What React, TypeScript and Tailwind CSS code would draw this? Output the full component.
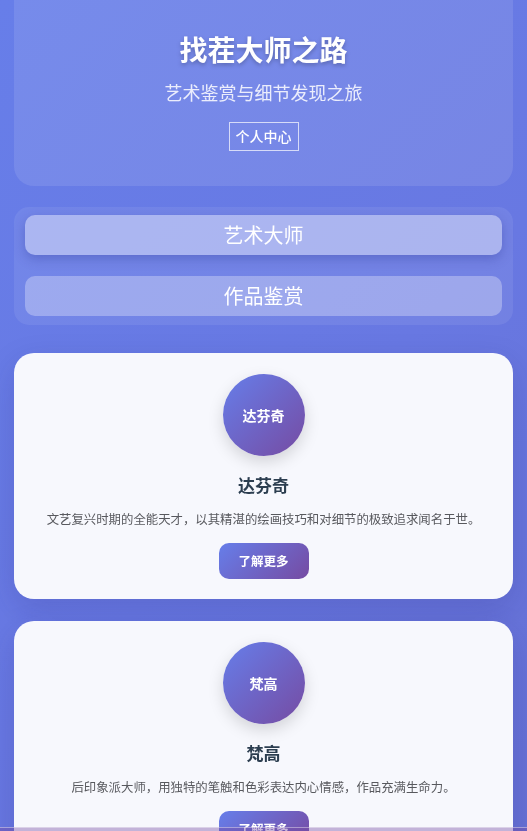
import React from 'react';

const masters = [
  { name: '达芬奇', desc: '文艺复兴时期的全能天才，以其精湛的绘画技巧和对细节的极致追求闻名于世。' },
  { name: '梵高', desc: '后印象派大师，用独特的笔触和色彩表达内心情感，作品充满生命力。' },
  { name: '莫奈', desc: '印象派创始人之一，擅长捕捉光影的瞬间变化，描绘自然的诗意之美。' },
];

const MasterCard: React.FC<{ name: string; desc: string }> = ({ name, desc }) => (
  <div className="flex flex-col items-center rounded-[20px] bg-[#f7f8fd] px-5 pt-[21px] pb-[20px] shadow-[0_10px_30px_rgba(40,40,120,0.18)]">
    <div className="flex h-[82px] w-[82px] items-center justify-center rounded-full bg-[linear-gradient(135deg,#667eea_0%,#764ba2_100%)] shadow-[0_6px_16px_rgba(0,0,0,0.15)]">
      <span className="text-[14px] font-bold text-white">{name}</span>
    </div>
    <h3 className="mt-[15px] text-[17px] leading-[27px] font-bold text-[#2c3e50]">{name}</h3>
    <p className="mt-[11px] text-center text-[12.4px] leading-[20px] text-[#58595e]">{desc}</p>
    <button className="mt-[14px] h-[36px] w-[90px] rounded-[10px] bg-[linear-gradient(135deg,#667eea_0%,#764ba2_100%)] text-[12.5px] font-semibold text-white">
      了解更多
    </button>
  </div>
);

export default function App() {
  return (
    <div className="relative min-h-screen font-['Noto_Sans_CJK_SC','Noto_Sans',sans-serif]">
      <div className="fixed inset-0 -z-10 bg-[linear-gradient(135deg,#677ee9_0%,#6878e2_55%,#6670d4_100%)]" />

      <div className="flex flex-col px-[14px]">
        {/* header */}
        <header className="flex flex-col items-center rounded-b-[20px] bg-white/10 pt-[31px] pb-[35px]">
          <h1 className="text-[28px] leading-[36px] font-bold text-white [text-shadow:0_2px_4px_rgba(0,0,0,0.25)]">
            找茬大师之路
          </h1>
          <p className="mt-[12px] text-[18px] leading-[27px] text-white/85">艺术鉴赏与细节发现之旅</p>
          <button className="mt-[16px] h-[29px] border border-white/70 px-[6px] text-[14px] font-medium text-white">
            个人中心
          </button>
        </header>

        {/* tabs */}
        <nav className="mt-[21px] flex flex-col gap-[21px] rounded-[15px] bg-white/[0.08] px-[11px] pt-[8px] pb-[9px]">
          <button className="h-[40px] rounded-[10px] bg-white/40 text-[20px] text-white shadow-[0_4px_12px_rgba(40,50,140,0.3)]">
            艺术大师
          </button>
          <button className="h-[40px] rounded-[10px] bg-white/30 text-[20px] text-white">作品鉴赏</button>
        </nav>

        {/* masters */}
        <div className="mt-[28px] flex flex-col gap-[22px] pb-[30px]">
          {masters.map((m) => (
            <MasterCard key={m.name} name={m.name} desc={m.desc} />
          ))}
        </div>
      </div>

      <div className="fixed inset-x-0 bottom-0 h-[4px] border-t border-white/40 bg-[#764ba2]/40" />
    </div>
  );
}
